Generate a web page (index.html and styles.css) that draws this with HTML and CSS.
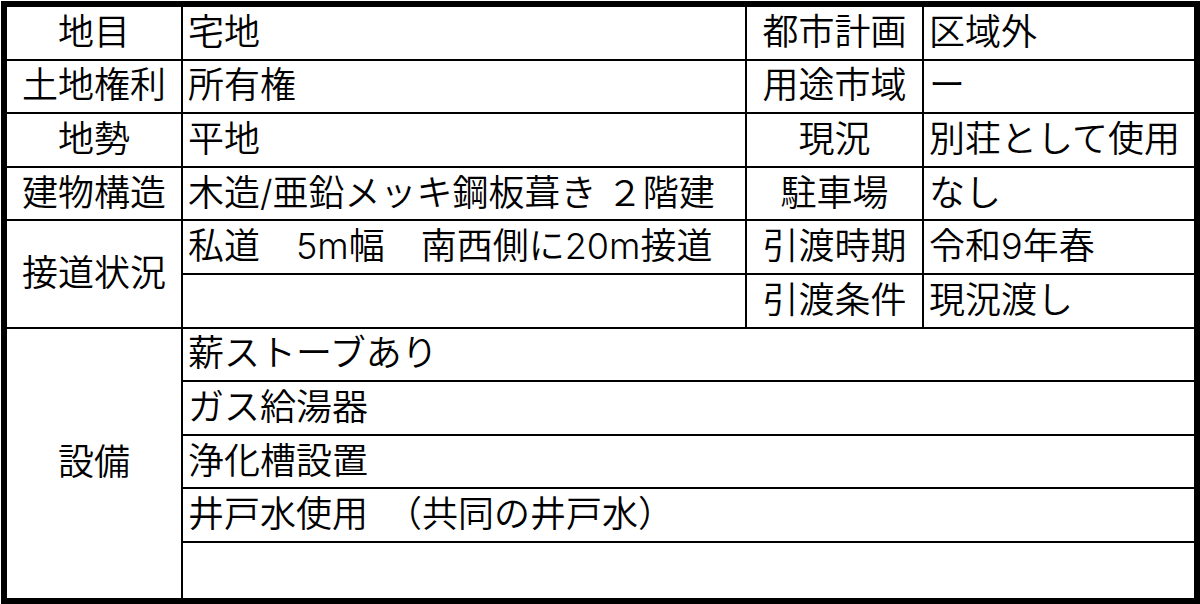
FILE: index.html
```html
<!DOCTYPE html>
<html lang="ja">
<head>
<meta charset="utf-8">
<title>物件概要</title>
<link rel="stylesheet" href="styles.css">
</head>
<body>
<div class="sheet">
  <div class="cell label">地目</div>
  <div class="cell value">宅地</div>
  <div class="cell label">都市計画</div>
  <div class="cell value">区域外</div>

  <div class="cell label">土地権利</div>
  <div class="cell value">所有権</div>
  <div class="cell label">用途市域</div>
  <div class="cell value">ー</div>

  <div class="cell label">地勢</div>
  <div class="cell value">平地</div>
  <div class="cell label">現況</div>
  <div class="cell value">別荘として使用</div>

  <div class="cell label">建物構造</div>
  <div class="cell value">木造/亜鉛メッキ鋼板葺き ２階建</div>
  <div class="cell label">駐車場</div>
  <div class="cell value">なし</div>

  <div class="cell label span2">接道状況</div>
  <div class="cell value">私道　5m幅　南西側に20m接道</div>
  <div class="cell label">引渡時期</div>
  <div class="cell value">令和9年春</div>
  <div class="cell value"></div>
  <div class="cell label">引渡条件</div>
  <div class="cell value">現況渡し</div>

  <div class="cell label span5">設備</div>
  <div class="cell value wide">薪ストーブあり</div>
  <div class="cell value wide">ガス給湯器</div>
  <div class="cell value wide">浄化槽設置</div>
  <div class="cell value wide">井戸水使用　（共同の井戸水）</div>
  <div class="cell value wide"></div>
</div>
</body>
</html>
```

FILE: styles.css
```css
html, body {
  margin: 0;
  padding: 0;
  background: #ffffff;
}

body {
  padding: 1px 0 0 1px;
}

.sheet {
  box-sizing: border-box;
  width: 1199px;
  height: 603px;
  background: #000000;
  padding: 6px;
  display: grid;
  grid-template-columns: 174px 562px 175px 270px;
  grid-template-rows: repeat(10, 51.6px) 1fr;
  gap: 2px;
  font-family: "Inter", "Noto Sans CJK JP", sans-serif;
  font-size: 36px;
  font-weight: 350;
  color: #000000;
}

.cell {
  background: #ffffff;
  display: flex;
  align-items: center;
  line-height: 1;
  white-space: nowrap;
  overflow: hidden;
  padding-bottom: 2px;
}

.label {
  justify-content: center;
}

.value {
  justify-content: flex-start;
  padding-left: 5px;
}

.span2 {
  grid-row: span 2;
}

.span5 {
  grid-row: span 5;
}

.wide {
  grid-column: 2 / 5;
}
```
